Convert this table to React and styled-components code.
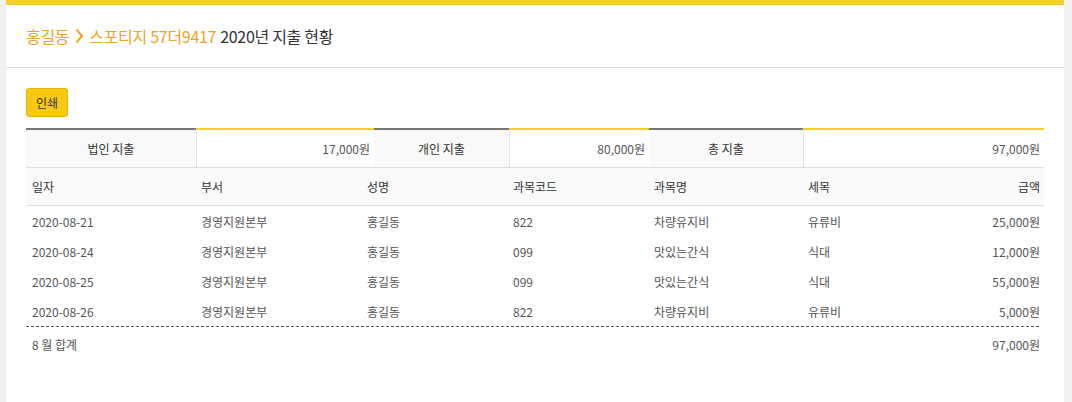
import React from "react";
import styled, { createGlobalStyle } from "styled-components";

const Global = createGlobalStyle`
  html, body { margin: 0; padding: 0; background: #f1f1f1; }
  body { font-family: "Noto Sans CJK KR", "Noto Sans", sans-serif; color: #333; }
`;

const Card = styled.div`
  margin: 0 8px 0 6px;
  background: #fff;
  border-top: 5px solid #f5cf2f;
  min-height: 397px;
`;

const Header = styled.div`
  height: 62px;
  padding: 0 20px;
  display: flex;
  align-items: center;
  border-bottom: 1px solid #dedede;
`;

const Title = styled.h1`
  margin: 0;
  font-size: 16px;
  font-weight: 400;
  letter-spacing: -0.3px;
  color: #333;
  display: flex;
  align-items: center;
  gap: 4px;
`;

const Crumb = styled.span`
  color: #e9a623;
`;

const Chevron = styled.svg`
  width: 10px;
  height: 16px;
  margin: 0 1px;
`;

const Content = styled.div`
  padding: 20px 20px 0;
`;

const PrintButton = styled.button`
  font-family: inherit;
  font-size: 12px;
  color: #333;
  background: #f8c913;
  border: 1px solid #e3b30c;
  border-radius: 3px;
  height: 29px;
  padding: 0 9px;
  cursor: pointer;
`;

const Summary = styled.div`
  margin-top: 11px;
  display: grid;
  grid-template-columns: 170px 178px 135px 140px 154px 241px;
  border-bottom: 1px solid #dedede;
`;

const SumLabel = styled.div`
  height: 37px;
  border-top: 2px solid #777;
  background: #f9f9f9;
  display: flex;
  align-items: center;
  justify-content: center;
  font-size: 12px;
  color: #333;
`;

const SumValue = styled.div`
  height: 37px;
  border-top: 2px solid #f5cf2f;
  border-left: 1px dotted #ccc;
  background: #fff;
  display: flex;
  align-items: center;
  justify-content: flex-end;
  padding-right: 4px;
  font-size: 12px;
  color: #555;
`;

const cols = "169px 166px 146px 141px 154px 120px 122px";

const HeadRow = styled.div`
  display: grid;
  grid-template-columns: ${cols};
  height: 37px;
  background: #fafafa;
  border-bottom: 1px solid #dedede;
`;

const Row = styled.div`
  display: grid;
  grid-template-columns: ${cols};
  height: ${(p) => p.$h || 30}px;
`;

const DashedRule = styled.hr`
  margin: 0 5px 0 0;
  border: 0;
  border-top: 1px dashed #555;
  height: 0;
`;

const Cell = styled.div`
  display: flex;
  align-items: center;
  padding: 0 ${(p) => (p.$right ? "4px" : "0")} 0 6px;
  justify-content: ${(p) => (p.$right ? "flex-end" : "flex-start")};
  font-size: 12px;
  color: ${(p) => (p.$head ? "#333" : "#555")};
  white-space: nowrap;
`;

const rows = [
  ["2020-08-21", "경영지원본부", "홍길동", "822", "차량유지비", "유류비", "25,000원"],
  ["2020-08-24", "경영지원본부", "홍길동", "099", "맛있는간식", "식대", "12,000원"],
  ["2020-08-25", "경영지원본부", "홍길동", "099", "맛있는간식", "식대", "55,000원"],
  ["2020-08-26", "경영지원본부", "홍길동", "822", "차량유지비", "유류비", "5,000원"],
];

const heads = ["일자", "부서", "성명", "과목코드", "과목명", "세목", "금액"];

export default function App() {
  return (
    <>
      <Global />
      <Card>
        <Header>
          <Title>
            <Crumb>홍길동</Crumb>
            <Chevron viewBox="0 0 10 16">
              <path d="M2.5 1.5 L8 8 L2.5 14.5" fill="none" stroke="#e9a623" strokeWidth="2" />
            </Chevron>
            <Crumb>스포티지 57더9417</Crumb>
            <span>2020년 지출 현황</span>
          </Title>
        </Header>
        <Content>
          <PrintButton>인쇄</PrintButton>
          <Summary>
            <SumLabel>법인 지출</SumLabel>
            <SumValue>17,000원</SumValue>
            <SumLabel>개인 지출</SumLabel>
            <SumValue>80,000원</SumValue>
            <SumLabel>총 지출</SumLabel>
            <SumValue>97,000원</SumValue>
          </Summary>
          <HeadRow>
            {heads.map((h, i) => (
              <Cell key={h} $head $right={i === 6}>
                {h}
              </Cell>
            ))}
          </HeadRow>
          {rows.map((r, ri) => (
            <Row key={ri}>
              {r.map((c, i) => (
                <Cell key={i} $right={i === 6}>
                  {c}
                </Cell>
              ))}
            </Row>
          ))}
          <DashedRule />
          <Row $h={35}>
            <Cell>8 월 합계</Cell>
            <Cell />
            <Cell />
            <Cell />
            <Cell />
            <Cell />
            <Cell $right>97,000원</Cell>
          </Row>
        </Content>
      </Card>
    </>
  );
}
